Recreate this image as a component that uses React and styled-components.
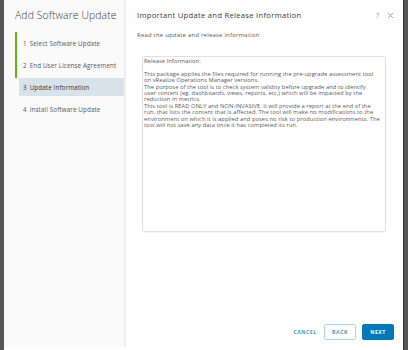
import React from "react";
import styled, { createGlobalStyle } from "styled-components";

const GlobalStyle = createGlobalStyle`
  html, body {
    margin: 0;
    padding: 0;
    background: #565656;
    font-family: "Open Sans", "Liberation Sans", sans-serif;
  }
`;

const steps = [
  { n: 1, label: "Select Software Update", done: true },
  { n: 2, label: "End User License Agreement", done: true },
  { n: 3, label: "Update Information", current: true },
  { n: 4, label: "Install Software Update" },
];

const releaseLines = [
  "Release Information:",
  "",
  "This package applies the files required for running the pre-upgrade assessment tool",
  "on vRealize Operations Manager versions.",
  "The purpose of the tool is to check system validity before upgrade and to identify",
  "user content (eg. dashboards, views, reports, etc.) which will be impacted by the",
  "reduction in metrics.",
  "This tool is READ ONLY and NON-INVASIVE. It will provide a report at the end of the",
  "run, that lists the content that is affected. The tool will make no modifications to the",
  "environment on which it is applied and poses no risk to production environments. The",
  "tool will not save any data once it has completed its run.",
];

const App = () => {
  return (
    <>
      <GlobalStyle />
      <Page>
        <Modal>
          <Sidebar>
            <WizardTitle>Add Software Update</WizardTitle>
            <StepList>
              {steps.map((s) => (
                <Step key={s.n} $done={s.done} $current={s.current}>
                  <span>{s.n}</span>
                  {s.label}
                </Step>
              ))}
            </StepList>
          </Sidebar>
          <Content>
            <Header>
              <h3>Important Update and Release Information</h3>
              <HeaderIcons>
                <span>?</span>
                <svg width="7" height="7" viewBox="0 0 7 7">
                  <path d="M1 1 L6 6 M6 1 L1 6" stroke="#8a8a8a" strokeWidth="0.8" />
                </svg>
              </HeaderIcons>
            </Header>
            <Subtitle>Read the update and release information</Subtitle>
            <ReleaseBox>
              {releaseLines.map((line, i) => (
                <Line key={i}>{line || "\u00a0"}</Line>
              ))}
            </ReleaseBox>
            <Footer>
              <Button $variant="link">Cancel</Button>
              <Button $variant="outline">Back</Button>
              <Button $variant="primary">Next</Button>
            </Footer>
          </Content>
        </Modal>
      </Page>
    </>
  );
};

export default App;

const Page = styled.div`
  width: 408px;
  height: 350px;
  overflow: hidden;
  padding: 0 4px;
  box-sizing: border-box;
`;

const Modal = styled.div`
  display: flex;
  width: 400px;
  height: 354px;
  background: #fff;
  border-right: 1px solid #333;
  box-sizing: border-box;
`;

const Sidebar = styled.div`
  width: 122px;
  height: 347px;
  flex-shrink: 0;
  background: #fafafa;
  border-right: 2px solid #eeeeee;
  padding: 8px 0 0 11px;
  box-sizing: border-box;
`;

const WizardTitle = styled.h2`
  margin: 0;
  font-size: 10.4px;
  font-weight: 300;
  color: #3a3a3a;
  line-height: 15px;
  letter-spacing: 0.1px;
  white-space: nowrap;
`;

const StepList = styled.div`
  display: flex;
  flex-direction: column;
  gap: 4px;
  margin-top: 11px;
`;

const Step = styled.div`
  position: relative;
  height: 18px;
  display: flex;
  align-items: center;
  margin-left: ${(p) => (p.$current ? "4px" : "0")};
  padding-left: ${(p) => (p.$current ? "4px" : "8px")};
  font-size: 6.2px;
  letter-spacing: 0.15px;
  white-space: nowrap;
  color: ${(p) => (p.$current ? "#333" : "#565656")};
  background: ${(p) => (p.$current ? "#d8e3e9" : "transparent")};

  &::before {
    content: "";
    display: ${(p) => (p.$done ? "block" : "none")};
    position: absolute;
    left: 0;
    top: -2px;
    bottom: -4px;
    width: 2px;
    background: #60b515;
  }

  span {
    margin-right: 3px;
  }
`;

const Content = styled.div`
  flex: 1;
  min-width: 0;
  display: flex;
  flex-direction: column;
  padding: 10px 9px 0 11px;
  box-sizing: border-box;
`;

const Header = styled.div`
  display: flex;
  align-items: center;
  justify-content: space-between;

  h3 {
    margin: 0;
    font-size: 7.6px;
    font-weight: 400;
    color: #3a3a3a;
    line-height: 11px;
    letter-spacing: 0.3px;
  }
`;

const HeaderIcons = styled.div`
  display: flex;
  align-items: center;
  gap: 8px;
  color: #8a8a8a;
  font-size: 6.5px;
`;

const Subtitle = styled.p`
  margin: 10px 0 0 0;
  font-size: 5.9px;
  color: #565656;
  line-height: 8px;
  letter-spacing: 0.25px;
`;

const ReleaseBox = styled.div`
  margin: 17px 8px 0 5px;
  height: 176px;
  overflow: hidden;
  border: 1px solid #e0e0e0;
  border-radius: 2px;
  padding: 1px 0 1px 1px;
  box-sizing: border-box;
  box-shadow: 0 1px 1px rgba(0, 0, 0, 0.04);
`;

const Line = styled.div`
  font-size: 5.8px;
  line-height: 6.4px;
  letter-spacing: 0.04px;
  color: #5a5a5a;
  white-space: nowrap;
`;

const Footer = styled.div`
  display: flex;
  justify-content: flex-end;
  align-items: center;
  gap: 6px;
  margin-top: 92px;
`;

const Button = styled.button`
  height: 16px;
  min-width: ${(p) => (p.$variant === "link" ? "26px" : "32px")};
  padding: 0 ${(p) => (p.$variant === "link" ? "0" : "4px")};
  font-family: inherit;
  font-size: 5.2px;
  font-weight: 700;
  letter-spacing: 0.5px;
  text-transform: uppercase;
  border-radius: 2px;
  cursor: pointer;
  border: 1px solid
    ${(p) =>
      p.$variant === "outline" ? "#89cbdf" : p.$variant === "primary" ? "#0079b8" : "transparent"};
  background: ${(p) => (p.$variant === "primary" ? "#0079b8" : "transparent")};
  color: ${(p) => (p.$variant === "primary" ? "#fff" : "#0079b8")};
  opacity: ${(p) => (p.$variant === "primary" ? 1 : 0.75)};
`;
